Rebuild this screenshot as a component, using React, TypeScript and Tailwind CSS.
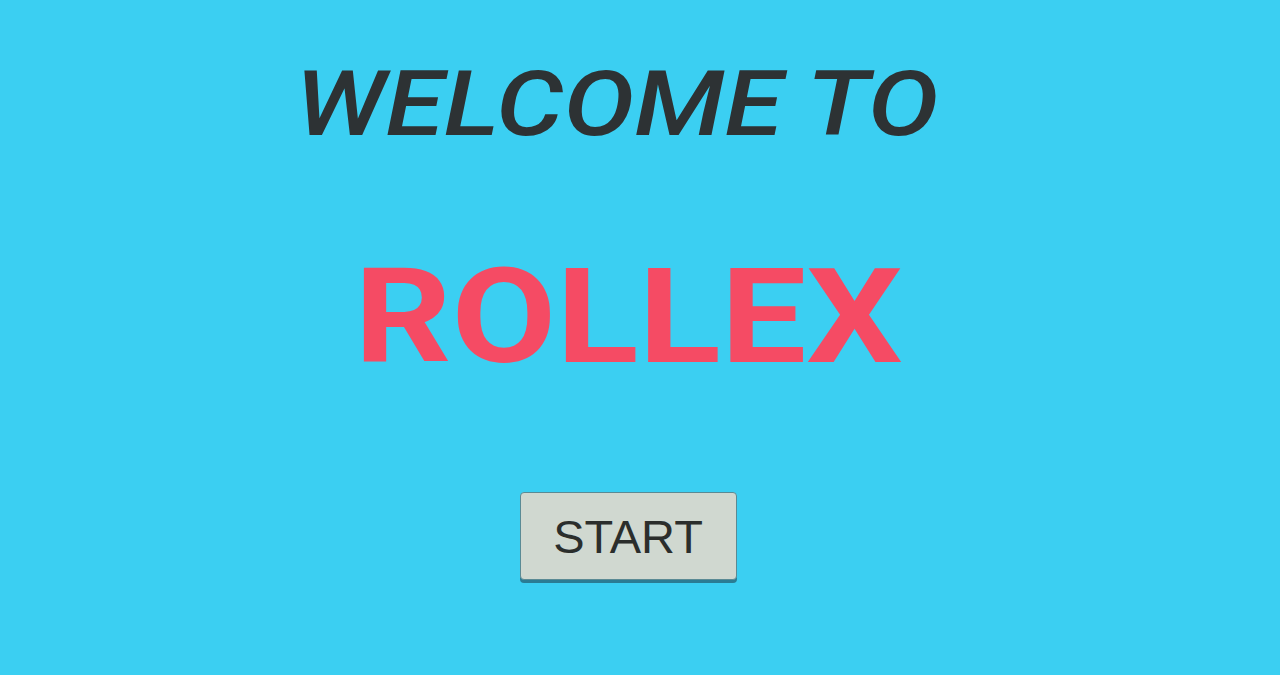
import React from 'react';

const App: React.FC = () => {
  return (
    <div className="w-full h-[675px] bg-[#3bcff2] flex flex-col items-center pr-[24px] overflow-hidden">
      <h1 className="mt-[60px] text-[90px] leading-[90px] font-medium italic text-[#2d3234] ml-[-22px] scale-x-[1.18] font-[family-name:Roboto,sans-serif]">
        WELCOME TO
      </h1>
      <h2 className="mt-[102px] text-[131px] leading-[131px] font-bold text-[#f54b64] scale-x-[1.16] font-[family-name:Roboto,sans-serif]">
        ROLLEX
      </h2>
      <button className="mt-[109px] w-[217px] h-[88px] bg-[#d0d8d0] border border-[#5a8a94] rounded-[4px] shadow-[0_3px_0_#2a7c94] flex items-center justify-center pt-[2px] text-[47px] text-[#2b2e2c] font-[family-name:'Liberation_Sans',Arial,sans-serif]">
        START
      </button>
    </div>
  );
};

export default App;
